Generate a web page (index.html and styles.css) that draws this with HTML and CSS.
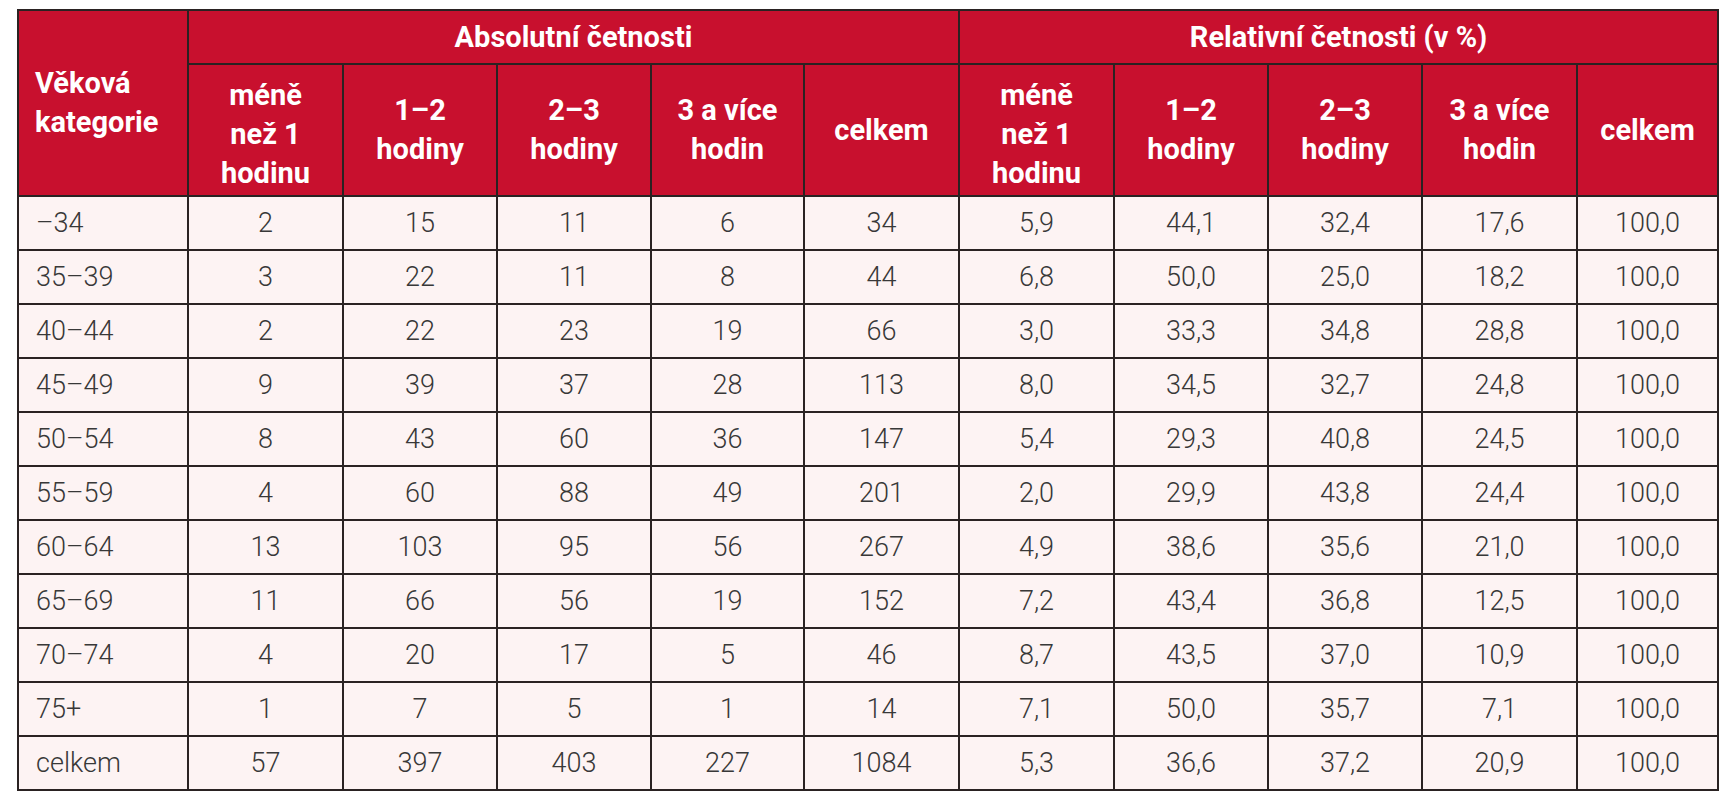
FILE: index.html
```html
<!DOCTYPE html>
<html lang="cs">
<head>
<meta charset="utf-8">
<title>Tabulka</title>
<link rel="stylesheet" href="styles.css">
</head>
<body>
<div class="wrap">
<table class="data">
  <colgroup>
    <col class="c0"><col class="c1"><col class="c2"><col class="c3"><col class="c4"><col class="c5">
    <col class="c6"><col class="c7"><col class="c8"><col class="c9"><col class="c10">
  </colgroup>
  <thead>
    <tr class="hr1">
      <th rowspan="2" class="first">Věková<br>kategorie</th>
      <th colspan="5">Absolutní četnosti</th>
      <th colspan="5">Relativní četnosti (v %)</th>
    </tr>
    <tr class="hr2">
      <th class="three">méně<br>než 1<br>hodinu</th>
      <th>1–2<br>hodiny</th>
      <th>2–3<br>hodiny</th>
      <th>3 a více<br>hodin</th>
      <th>celkem</th>
      <th class="three">méně<br>než 1<br>hodinu</th>
      <th>1–2<br>hodiny</th>
      <th>2–3<br>hodiny</th>
      <th>3 a více<br>hodin</th>
      <th>celkem</th>
    </tr>
  </thead>
  <tbody>
    <tr><td>–34</td><td>2</td><td>15</td><td>11</td><td>6</td><td>34</td><td>5,9</td><td>44,1</td><td>32,4</td><td>17,6</td><td>100,0</td></tr>
    <tr><td>35–39</td><td>3</td><td>22</td><td>11</td><td>8</td><td>44</td><td>6,8</td><td>50,0</td><td>25,0</td><td>18,2</td><td>100,0</td></tr>
    <tr><td>40–44</td><td>2</td><td>22</td><td>23</td><td>19</td><td>66</td><td>3,0</td><td>33,3</td><td>34,8</td><td>28,8</td><td>100,0</td></tr>
    <tr><td>45–49</td><td>9</td><td>39</td><td>37</td><td>28</td><td>113</td><td>8,0</td><td>34,5</td><td>32,7</td><td>24,8</td><td>100,0</td></tr>
    <tr><td>50–54</td><td>8</td><td>43</td><td>60</td><td>36</td><td>147</td><td>5,4</td><td>29,3</td><td>40,8</td><td>24,5</td><td>100,0</td></tr>
    <tr><td>55–59</td><td>4</td><td>60</td><td>88</td><td>49</td><td>201</td><td>2,0</td><td>29,9</td><td>43,8</td><td>24,4</td><td>100,0</td></tr>
    <tr><td>60–64</td><td>13</td><td>103</td><td>95</td><td>56</td><td>267</td><td>4,9</td><td>38,6</td><td>35,6</td><td>21,0</td><td>100,0</td></tr>
    <tr><td>65–69</td><td>11</td><td>66</td><td>56</td><td>19</td><td>152</td><td>7,2</td><td>43,4</td><td>36,8</td><td>12,5</td><td>100,0</td></tr>
    <tr><td>70–74</td><td>4</td><td>20</td><td>17</td><td>5</td><td>46</td><td>8,7</td><td>43,5</td><td>37,0</td><td>10,9</td><td>100,0</td></tr>
    <tr><td>75+</td><td>1</td><td>7</td><td>5</td><td>1</td><td>14</td><td>7,1</td><td>50,0</td><td>35,7</td><td>7,1</td><td>100,0</td></tr>
    <tr><td>celkem</td><td>57</td><td>397</td><td>403</td><td>227</td><td>1084</td><td>5,3</td><td>36,6</td><td>37,2</td><td>20,9</td><td>100,0</td></tr>
  </tbody>
</table>
</div>
</body>
</html>
```
FILE: styles.css
```css
html, body {
  margin: 0;
  padding: 0;
  background: #ffffff;
}
.wrap {
  padding: 9px 0 0 17px;
}
.data {
  border-collapse: collapse;
  table-layout: fixed;
  width: 1702px;
  font-family: Roboto, "Liberation Sans", sans-serif;
  border: 2px solid #2a2222;
}
.c0 { width: 170px; }
.c1 { width: 155px; }
.c2 { width: 154px; }
.c3 { width: 154px; }
.c4 { width: 153px; }
.c5 { width: 155px; }
.c6 { width: 155px; }
.c7 { width: 154px; }
.c8 { width: 154px; }
.c9 { width: 155px; }
.c10 { width: 141px; }

.data th, .data td {
  border: 2px solid #2a2222;
  padding: 0;
}
.data th {
  background: #c8102e;
  color: #ffffff;
  font-weight: 700;
  font-size: 29px;
  line-height: 39px;
  text-align: center;
  vertical-align: middle;
}
.data th.first {
  text-align: left;
  padding-left: 16px;
}
.data th.three {
  padding-top: 8px;
}
.hr1 { height: 54px; }
.hr2 { height: 132px; }
.data tbody tr { height: 54px; }
.data td {
  background: #fdf3f3;
  color: #383838;
  font-weight: 300;
  font-size: 27px;
  text-align: center;
  vertical-align: middle;
}
.data td:first-child {
  text-align: left;
  padding-left: 17px;
}
```
